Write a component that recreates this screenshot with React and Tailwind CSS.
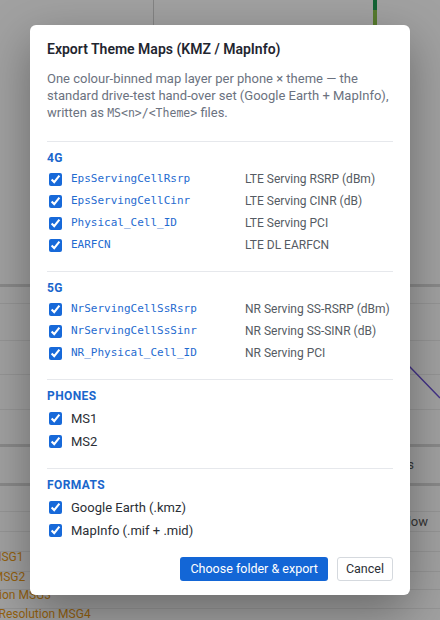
import React from "react";

const SANS = "font-['Roboto','Noto_Sans',sans-serif]";
const MONO = "font-['DejaVu_Sans_Mono','Liberation_Mono',monospace]";

// Chart area of the dimmed app behind the dialog
function ChartArea() {
  return (
    <svg width="440" height="444" viewBox="0 0 440 444" className="block">
      <line x1="153.5" y1="0" x2="153.5" y2="284" stroke="#d2d2d2" strokeWidth="1" />
      <rect x="373" y="0" width="4" height="10" fill="#1f9d55" />
      <rect x="373" y="10" width="4" height="60" fill="#8bc34a" />
      <rect x="0" y="284" width="440" height="3" fill="#d9d9d9" />
      <line x1="0" y1="303.5" x2="440" y2="303.5" stroke="#ececec" />
      <line x1="0" y1="340.5" x2="440" y2="340.5" stroke="#ececec" />
      <line x1="0" y1="374.5" x2="440" y2="374.5" stroke="#ececec" />
      <line x1="0" y1="409.5" x2="440" y2="409.5" stroke="#ececec" />
      <polyline
        points="300,290 350,318 410,367 440,398"
        fill="none"
        stroke="#6a4fd6"
        strokeWidth="1.5"
      />
      <line x1="435" y1="455" x2="440" y2="455" stroke="#666" />
    </svg>
  );
}

function Background() {
  return (
    <div className={`absolute inset-0 bg-white ${SANS}`}>
      <ChartArea />
      <div className="h-[3px] bg-[#d9d9d9]" />
      <div className="flex h-[36px] items-center justify-end pr-[26px] text-[13px] text-[#555]">Events</div>
      <div className="h-[3px] bg-[#d9d9d9]" />
      <div className="h-[26px] border-b border-[#ececec]" />
      <div className="flex h-[20px] items-center justify-end border-b border-[#ececec] pr-[12px] text-[13px] text-[#555]">
        Time window
      </div>
      <div className="h-[20px] border-b border-[#ececec]" />
      <div className="-ml-[63px] flex flex-col whitespace-nowrap text-[12px] leading-[9px] text-[#eb9a17]">
        <div className="h-[20px] border-b border-[#ececec] pt-[1px]">Preamble MSG1</div>
        <div className="h-[18px] border-b border-[#ececec] pt-[1px]">Response MSG2</div>
        <div className="h-[19px] border-b border-[#ececec] pt-[1px]">UE Connection MSG3</div>
        <div className="h-[19px] border-b border-[#ececec] pt-[1px]">Contention Resolution MSG4</div>
      </div>
    </div>
  );
}

const Check = () => (
  <input
    type="checkbox"
    defaultChecked
    className="m-0 ml-[2px] h-[13px] w-[13px] shrink-0 accent-[#1769d9]"
  />
);

function CodeRow({ code, label }) {
  return (
    <label className="flex h-[22px] items-center">
      <Check />
      <span className={`ml-[9px] w-[174px] shrink-0 text-[11px] text-[#1f6bd0] ${MONO}`}>{code}</span>
      <span className="whitespace-nowrap text-[12px] text-[#555b63]">{label}</span>
    </label>
  );
}

function PlainRow({ label }) {
  return (
    <label className="flex h-[23px] items-center">
      <Check />
      <span className="ml-[9px] text-[13px] text-[#2b2f36]">{label}</span>
    </label>
  );
}

function Section({ title, children, gap = "mt-[2px]" }) {
  return (
    <div className="border-t border-[#e6e8ec] pt-[8px] pb-[15px]">
      <div className="text-[12px] font-bold leading-4 tracking-[0.4px] text-[#1a66cc]">{title}</div>
      <div className={gap}>{children}</div>
    </div>
  );
}

export default function App() {
  return (
    <div className={`relative h-[620px] w-[440px] overflow-hidden ${SANS}`}>
      <Background />
      <div className="absolute inset-0 flex items-center justify-center bg-black/[0.37]">
        <div className="w-[380px] rounded-[6px] bg-white px-[17px] pt-[14px] pb-[14px] shadow-[0_16px_48px_rgba(0,0,0,0.35)]">
          <h2 className="text-[14px] font-semibold leading-5 text-[#1f2630]">
            Export Theme Maps (KMZ / MapInfo)
          </h2>
          <p className="mt-[11px] mb-[19px] text-[13px] leading-[17px] text-[#6b7280]">
            One colour-binned map layer per phone × theme — the
            <br />
            standard drive-test hand-over set (Google Earth + MapInfo),
            <br />
            written as <span className={`text-[11.5px] ${MONO}`}>MS&lt;n&gt;/&lt;Theme&gt;</span> files.
          </p>

          <Section title="4G">
            <CodeRow code="EpsServingCellRsrp" label="LTE Serving RSRP (dBm)" />
            <CodeRow code="EpsServingCellCinr" label="LTE Serving CINR (dB)" />
            <CodeRow code="Physical_Cell_ID" label="LTE Serving PCI" />
            <CodeRow code="EARFCN" label="LTE DL EARFCN" />
          </Section>

          <Section title="5G">
            <CodeRow code="NrServingCellSsRsrp" label="NR Serving SS-RSRP (dBm)" />
            <CodeRow code="NrServingCellSsSinr" label="NR Serving SS-SINR (dB)" />
            <CodeRow code="NR_Physical_Cell_ID" label="NR Serving PCI" />
          </Section>

          <Section title="PHONES" gap="mt-[3px]">
            <PlainRow label="MS1" />
            <PlainRow label="MS2" />
          </Section>

          <Section title="FORMATS" gap="mt-[3px]">
            <PlainRow label="Google Earth (.kmz)" />
            <PlainRow label="MapInfo (.mif + .mid)" />
          </Section>

          <div className="flex justify-end gap-[9px]">
            <button className="h-[24px] rounded-[3px] bg-[#1366d6] px-[10px] text-[12.5px] text-white">
              Choose folder &amp; export
            </button>
            <button className="h-[24px] rounded-[3px] border border-[#d5d9de] bg-white px-[8px] text-[12.5px] text-[#2b2f36]">
              Cancel
            </button>
          </div>
        </div>
      </div>
    </div>
  );
}
